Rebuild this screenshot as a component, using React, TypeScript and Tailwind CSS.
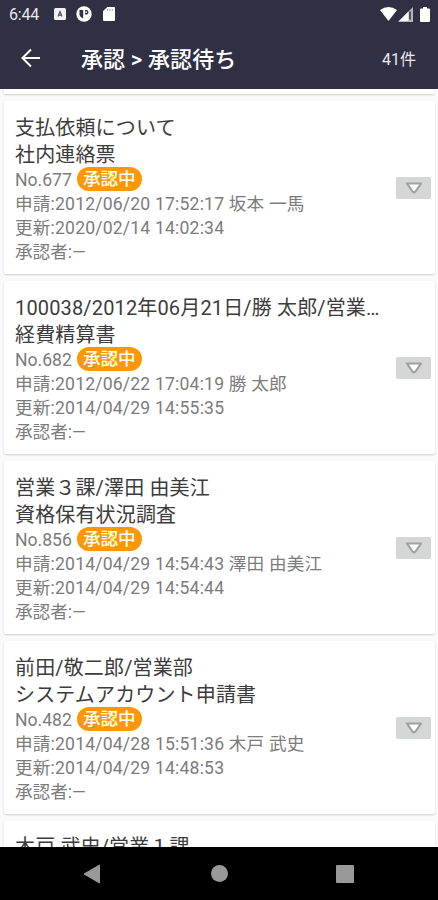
type Approval = {
  subject: string;
  form: string;
  no: number;
  applied: string;
  applicant: string;
  updated: string;
};

const approvals: Approval[] = [
  {
    subject: '支払依頼について',
    form: '社内連絡票',
    no: 677,
    applied: '2012/06/20 17:52:17',
    applicant: '坂本 一馬',
    updated: '2020/02/14 14:02:34',
  },
  {
    subject: '100038/2012年06月21日/勝 太郎/営業部',
    form: '経費精算書',
    no: 682,
    applied: '2012/06/22 17:04:19',
    applicant: '勝 太郎',
    updated: '2014/04/29 14:55:35',
  },
  {
    subject: '営業３課/澤田 由美江',
    form: '資格保有状況調査',
    no: 856,
    applied: '2014/04/29 14:54:43',
    applicant: '澤田 由美江',
    updated: '2014/04/29 14:54:44',
  },
  {
    subject: '前田/敬二郎/営業部',
    form: 'システムアカウント申請書',
    no: 482,
    applied: '2014/04/28 15:51:36',
    applicant: '木戸 武史',
    updated: '2014/04/29 14:48:53',
  },
];

const StatusBar = () => (
  <div className="flex h-7 items-center justify-between pl-[9px] pr-2 text-white">
    <div className="flex items-center">
      <span className="w-[45px] pt-0.5 text-[16px] leading-7 tracking-[-0.2px] text-[#e8e8ec]">6:44</span>
      <svg width="12" height="12" viewBox="0 0 12 12">
        <rect width="12" height="12" rx="1.5" fill="#f2f2f4" />
        <path d="M4 8.500 6 3.500l2 5M4.600 7.200h2.800" fill="none" stroke="#50505f" strokeWidth="1.2" />
      </svg>
      <svg width="16" height="16" viewBox="0 0 16 16" className="ml-[10px]">
        <circle cx="8" cy="8" r="7.7" fill="#fff" />
        <path d="M3.500 4h3.700v8.500A5 5 0 0 1 3.500 9zM9 4h1.200a2.300 2.300 0 0 1 0 4.600H9z" fill="#303044" />
        <circle cx="10.2" cy="6.2" r="0.9" fill="#fff" />
      </svg>
      <svg width="12" height="14" viewBox="0 0 12 14" className="ml-[11px]">
        <path d="M4.3 0H11q1 0 1 1v12q0 1-1 1H1q-1 0-1-1V4.3z" fill="#fff" />
        <path d="M4.600 2.200v1.600M6.900 2.200v1.600M9.200 2.200v1.600" stroke="#8d8d99" />
      </svg>
    </div>
    <div className="flex items-center">
      <svg width="17" height="14" viewBox="0 0 17 14">
        <path d="M0 3Q8.5-3 17 3L8.5 14z" fill="#fff" />
      </svg>
      <svg width="15" height="15" viewBox="0 0 15 15" className="ml-px">
        <path d="M15 0v15H0z" fill="#b4b4bd" />
        <path d="M10.500 4.500V14H1z" fill="#fff" />
        <path d="M12 4.500v8" stroke="#303044" strokeWidth="1.5" />
      </svg>
      <svg width="10" height="15" viewBox="0 0 10 15" className="ml-[7px]">
        <path d="M3 0h4v1.500h2q1 0 1 1V14q0 1-1 1H1q-1 0-1-1V2.500q0-1 1-1h2z" fill="#fff" />
      </svg>
    </div>
  </div>
);

const AppBar = () => (
  <div className="flex h-[61px] items-center pl-[21px] pr-[22px] text-white">
    <svg width="20" height="20" viewBox="0 0 20 20" className="-mt-0.5" fill="none" stroke="#fff" strokeWidth="2">
      <path d="M19 10H2M10 1.500 1.500 10 10 18.500" />
    </svg>
    <h1 className="ml-10 flex-1 pt-0.5 text-[22px] leading-8 font-medium tracking-[0.12px]">承認 &gt; 承認待ち</h1>
    <span className="pt-0.5 text-[16px] text-[#e8e8ec]">41件</span>
  </div>
);

const ApprovalCard = ({ item }: { item: Approval }) => (
  <li className="flex h-[173px] shrink-0 items-center rounded-[2px] bg-white pl-[11px] pr-1 shadow-[0_1px_2px_rgba(0,0,0,0.18)]">
    <div className="min-w-0 flex-1 pt-1 text-[17.6px] leading-6 text-[#7c7c7c]">
      <p className="w-[366px] truncate text-[20px] leading-[27px] tracking-[0.15px] text-[#3c3c3c]">{item.subject}</p>
      <p className="text-[20px] leading-[27px] tracking-[0.15px] text-[#3c3c3c]">{item.form}</p>
      <div className="flex h-[23px] items-center leading-[23px]">
        <span>No.{item.no}</span>
        <span className="-mt-[3px] ml-[5px] h-6 rounded-full bg-[#ff9800] px-[6px] leading-[25px] font-medium text-white">
          承認中
        </span>
      </div>
      <p className="whitespace-nowrap tracking-[0.18px]">
        申請:{item.applied} {item.applicant}
      </p>
      <p className="tracking-[0.18px]">更新:{item.updated}</p>
      <p>承認者:—</p>
    </div>
    <button className="flex h-[22px] w-[35px] shrink-0 items-center justify-center rounded-[2px] bg-[#d5d6d6]">
      <svg width="18" height="12" viewBox="0 0 18 12">
        <path d="M2 1.500h14L10.500 9.500q-1.500 1.500-3 0z" fill="#fff" stroke="#a0a0a0" strokeWidth="2.2" strokeLinejoin="round" />
      </svg>
    </button>
  </li>
);

const NavigationBar = () => (
  <nav className="flex h-[53px] shrink-0 items-center bg-black pl-[83px]">
    <svg width="18" height="20" viewBox="0 0 18 20">
      <path d="M16.500 1v18L1 10z" fill="#999" stroke="#999" strokeLinejoin="round" />
    </svg>
    <span className="ml-[110px] size-[17px] rounded-full bg-[#999999]" />
    <span className="ml-[108px] size-[18px] rounded-[1px] bg-[#999999]" />
  </nav>
);

export default function App() {
  return (
    <div className="flex h-[900px] w-[438px] flex-col overflow-hidden bg-[#fafafa] font-[Roboto,'Noto_Sans_CJK_JP',sans-serif]">
      <header className="shrink-0 bg-[#303044]">
        <StatusBar />
        <AppBar />
      </header>
      <main className="min-h-0 flex-1 overflow-hidden">
        <div className="mx-1 h-[5px] bg-white shadow-[0_1px_2px_rgba(0,0,0,0.18)]" />
        <ul className="mt-[7px] flex flex-col gap-[7px] pl-1 pr-[3px]">
          {approvals.map((item) => (
            <ApprovalCard key={item.no} item={item} />
          ))}
          <li className="h-[173px] shrink-0 rounded-[2px] bg-white pt-[13px] pl-[11px] text-[20px] leading-[27px] tracking-[0.15px] text-[#3c3c3c] shadow-[0_1px_2px_rgba(0,0,0,0.18)]">
            木戸 武史/営業１課
          </li>
        </ul>
      </main>
      <NavigationBar />
    </div>
  );
}
